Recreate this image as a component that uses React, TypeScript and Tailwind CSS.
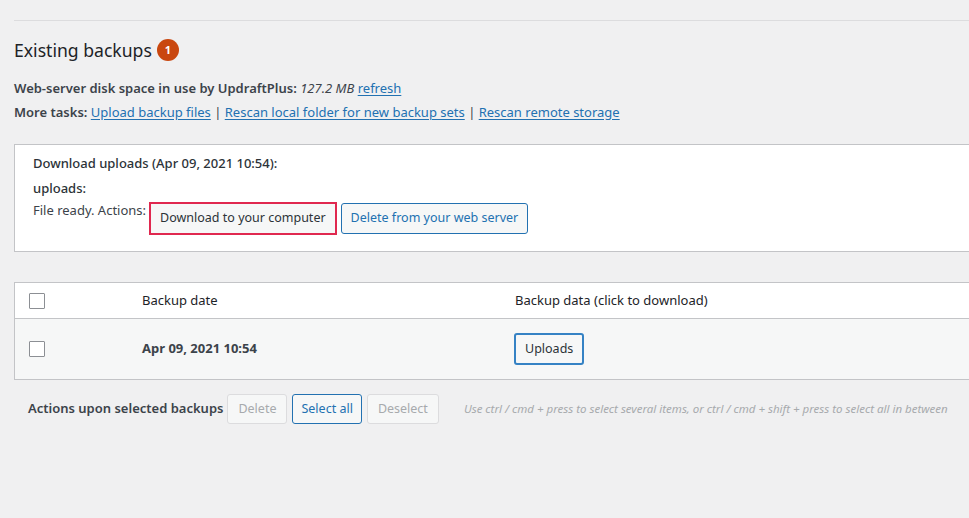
import React from 'react';

const link = 'text-[#2271b1] underline underline-offset-2';

const Checkbox: React.FC = () => (
  <span className="block w-4 h-4 border border-[#8c8f94] bg-white rounded-[1px]" />
);

const App: React.FC = () => (
  <div className="min-h-[518px] bg-[#f0f0f1] text-[#3c434a] font-['Noto_Sans',sans-serif] text-[13px] pl-[14px] pt-5 overflow-hidden">
    <div className="border-t border-[#dcdcde]" />

    <div className="flex items-center gap-[5px] mt-[17px]">
      <h2 className="text-[17.6px] text-[#1d2327] leading-6">Existing backups</h2>
      <span className="w-[22px] h-[22px] rounded-full bg-[#c9470f] text-white text-[11px] font-bold flex items-center justify-center">1</span>
    </div>

    <div className="mt-[14px] leading-6">
      <p>
        <b className="font-semibold">Web-server disk space in use by UpdraftPlus:</b> <i>127.2 MB</i>{' '}
        <a className={link}>refresh</a>
      </p>
      <p>
        <b className="font-semibold">More tasks:</b> <a className={link}>Upload backup files</a> |{' '}
        <a className={link}>Rescan local folder for new backup sets</a> |{' '}
        <a className={link}>Rescan remote storage</a>
      </p>
    </div>

    <div className="mt-[20px] bg-white border border-[#c3c4c7] border-r-0 h-[108px] pl-[18px] pt-[9px] text-[13px]">
      <p className="font-medium text-[#2c3338]">Download uploads (Apr 09, 2021 10:54):</p>
      <p className="font-medium text-[#2c3338] mt-[5px]">uploads:</p>
      <div className="flex items-start mt-[2px]">
        <span className="mt-[1px] mr-[3px]">File ready. Actions:</span>
        <button className="h-[33px] px-[9px] border-2 border-[#e0284f] bg-[#f6f7f7] text-[#2c3338] text-[12.5px] mt-[2px]">
          Download to your computer
        </button>
        <button className="h-[31px] px-[9px] ml-[4px] mt-[3px] border border-[#2271b1] rounded-[3px] bg-[#f6f7f7] text-[#2271b1] text-[12.5px]">
          Delete from your web server
        </button>
      </div>
    </div>

    <div className="mt-[30px] border border-[#c3c4c7] border-r-0">
      <div className="flex items-center h-[36px] bg-white border-b border-[#c3c4c7]">
        <div className="w-[127px] pl-[14px]"><Checkbox /></div>
        <div className="w-[373px] text-[#1d2327]">Backup date</div>
        <div className="text-[#1d2327]">Backup data (click to download)</div>
      </div>
      <div className="flex items-center h-[60px] bg-[#f6f7f7]">
        <div className="w-[127px] pl-[14px]"><Checkbox /></div>
        <div className="w-[372px] font-bold text-[#3c434a]">Apr 09, 2021 10:54</div>
        <button className="h-[32px] px-[9px] border-2 border-[#3582c4] rounded-[3px] bg-[#f6f7f7] text-[#2c3338] text-[12.5px]">
          Uploads
        </button>
      </div>
    </div>

    <div className="flex items-center mt-[14px] pl-[14px]">
      <b className="font-semibold mr-[4px]">Actions upon selected backups</b>
      <button className="h-[30px] px-[10px] border border-[#dcdcde] rounded-[3px] bg-[#f6f7f7] text-[#a7aaad] text-[12.5px]">Delete</button>
      <button className="h-[30px] px-[8px] ml-[5px] border border-[#2271b1] rounded-[3px] bg-[#f6f7f7] text-[#2271b1] text-[12.5px]">Select all</button>
      <button className="h-[30px] px-[10px] ml-[5px] border border-[#dcdcde] rounded-[3px] bg-[#f6f7f7] text-[#a7aaad] text-[12.5px]">Deselect</button>
      <i className="ml-[25px] text-[11.5px] text-[#a7aaad]">
        Use ctrl / cmd + press to select several items, or ctrl / cmd + shift + press to select all in between
      </i>
    </div>
  </div>
);

export default App;
